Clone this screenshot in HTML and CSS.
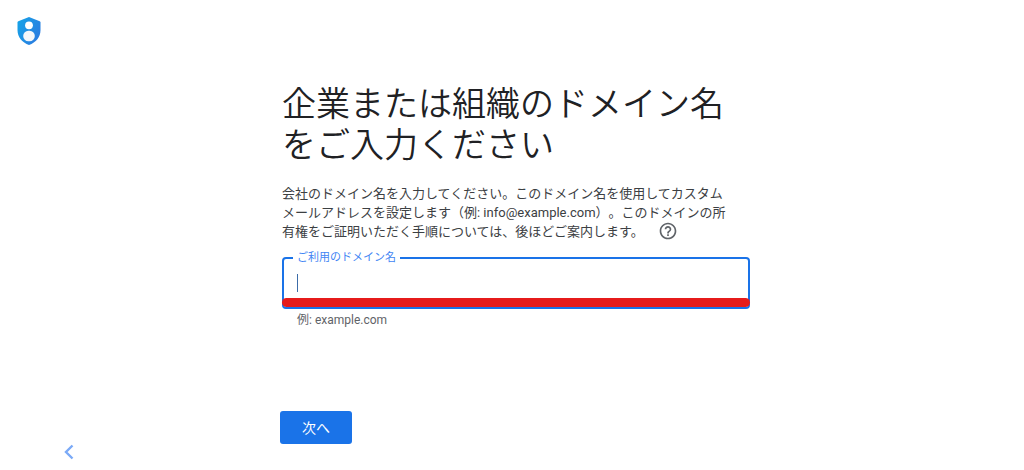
FILE: index.html
```html
<!DOCTYPE html>
<html lang="ja">

<head>
  <meta charset="UTF-8">
  <meta name="viewport" content="width=device-width, initial-scale=1.0">
  <title>ドメイン名の入力</title>
  <link rel="stylesheet" href="styles.css">
</head>

<body>
  <header class="header">
    <svg class="logo" viewBox="0 0 24 28" aria-hidden="true">
      <defs>
        <linearGradient id="shield" x1="0" y1="0" x2="1" y2="0.6">
          <stop offset="0" stop-color="#14a5e8" />
          <stop offset="1" stop-color="#2b7de0" />
        </linearGradient>
      </defs>
      <path fill="url(#shield)" d="M12 0 22.700 4.200Q23.500 4.600 23.500 5.500V13C23.500 20 19 25.500 12 28 5 25.500.5 20 .5 13V5.500Q.5 4.600 1.300 4.200Z" />
      <circle cx="12" cy="8.300" r="3.900" fill="#fff" />
      <rect x="6.200" y="13.800" width="11.600" height="10.400" rx="5.200" fill="#f5f7fa" />
    </svg>
  </header>

  <main class="main">
    <h1 class="title">企業または組織のドメイン名<br>をご入力ください</h1>
    <p class="description">
      会社のドメイン名を入力してください。このドメイン名を使用してカスタム<br>メールアドレスを設定します（例: info@example.com）。このドメインの所<br>有権をご証明いただく手順については、後ほどご案内します。
      <button class="help" type="button" aria-label="ヘルプ">
        <svg viewBox="0 0 24 24" aria-hidden="true">
          <path fill="#5f6368" d="M11 18h2v-2h-2v2zm1-16C6.480 2 2 6.480 2 12s4.480 10 10 10 10-4.480 10-10S17.520 2 12 2zm0 18c-4.410 0-8-3.590-8-8s3.590-8 8-8 8 3.590 8 8-3.590 8-8 8zm0-14c-2.210 0-4 1.790-4 4h2c0-1.100.9-2 2-2s2 .9 2 2c0 2-3 1.750-3 5h2c0-2.250 3-2.500 3-5 0-2.210-1.790-4-4-4z" />
        </svg>
      </button>
    </p>

    <form class="form">
      <fieldset class="field">
        <legend class="field-legend"><label for="domain">ご利用のドメイン名</label></legend>
        <input class="field-input" id="domain" type="text" aria-describedby="domainHint" autocomplete="off">
        <span class="caret"></span>
        <span class="marker"></span>
      </fieldset>
      <div class="hint" id="domainHint">例: example.com</div>
      <button class="next" type="submit">次へ</button>
    </form>
  </main>

  <footer class="footer">
    <a class="back" href="#" aria-label="戻る">
      <svg viewBox="0 0 10 16" aria-hidden="true">
        <path d="M8.500 1.500 2 8l6.500 6.500" fill="none" stroke="#7baaf7" stroke-width="2.400" />
      </svg>
    </a>
  </footer>
</body>

</html>
```

FILE: styles.css
```css
* {
  box-sizing: border-box;
}

body {
  margin: 0;
  background-color: #fff;
  color: #202124;
  font-family: Roboto, "Noto Sans CJK JP", sans-serif;
}

.header {
  padding: 17px 17px 0;
}

.logo {
  display: block;
  width: 24px;
  height: 28px;
}

.main {
  width: 100%;
  max-width: 476px;
  margin: 39px auto 0;
  padding-left: 8px;
}

.title {
  margin: 0;
  font-size: 34px;
  line-height: 41px;
  font-weight: 350;
  white-space: nowrap;
}

.description {
  margin: 18px 0 0;
  color: #3c4043;
  font-size: 13px;
  line-height: 19px;
  white-space: nowrap;
  text-spacing-trim: space-all;
}

.help {
  width: 20px;
  height: 19px;
  margin: 0 0 0 11px;
  padding: 0;
  border: 0;
  background: none;
  vertical-align: top;
}

.help svg {
  display: block;
  width: 20px;
  height: 20px;
  margin-top: -2px;
}

.field {
  position: relative;
  min-width: 0;
  height: 60px;
  margin: 8px 0 0;
  padding: 0 9px;
  border: 2px solid #1a73e8;
  border-radius: 4px;
}

.field-legend {
  padding: 0 4px;
  color: #4285f4;
  font-size: 11px;
  line-height: 18px;
}

.field-input {
  display: block;
  width: 100%;
  height: 34px;
  padding: 0 4px;
  border: 0;
  outline: 0;
  background: none;
  font-family: inherit;
  font-size: 14px;
}

.caret {
  position: absolute;
  left: 13px;
  bottom: 15px;
  width: 1px;
  height: 18px;
  background-color: #3c6ca8;
}

/* red underline laid over the bottom of the field */
.marker {
  position: absolute;
  left: -2px;
  right: -2px;
  bottom: 0;
  height: 9px;
  border-radius: 5px;
  background-color: #e61b1b;
}

.hint {
  margin-top: 2px;
  padding-left: 15px;
  color: #5f6368;
  font-size: 12px;
  line-height: 18px;
}

.next {
  display: block;
  margin: 82px 0 0 -2px;
  padding: 0 22px;
  height: 33px;
  border: 0;
  border-radius: 3px;
  background-color: #1a73e8;
  color: #fff;
  font-family: inherit;
  font-size: 14px;
  line-height: 32px;
}

.footer {
  padding-left: 64px;
}

.back {
  display: block;
  width: 10px;
}

.back svg {
  display: block;
  width: 10px;
  height: 16px;
}
```
